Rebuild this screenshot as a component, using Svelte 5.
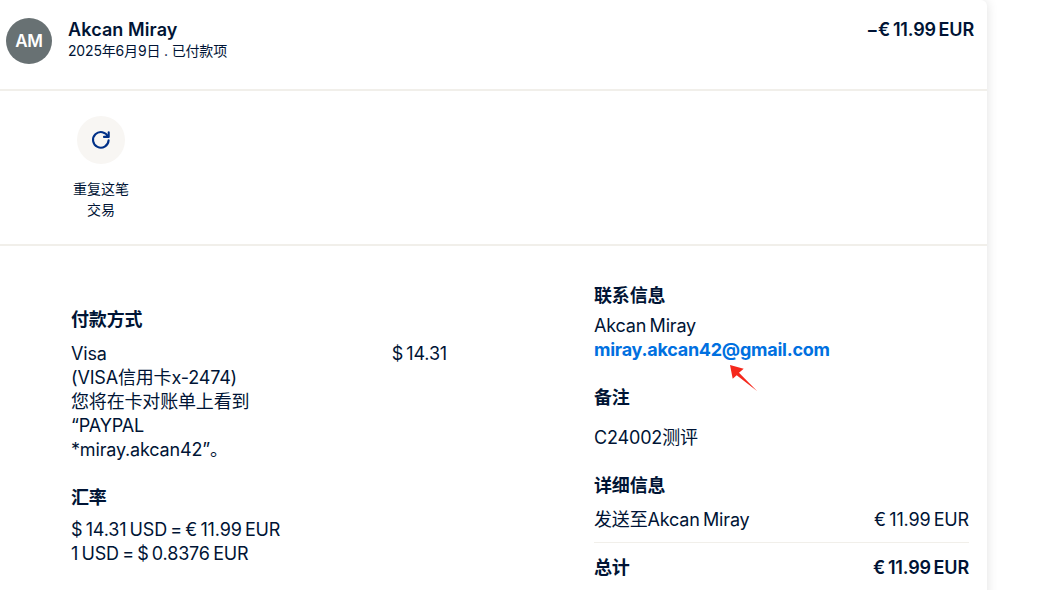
<script lang="ts">
  const rates = ['$ 14.31 USD = € 11.99 EUR', '1 USD = $ 0.8376 EUR']
</script>

<div class="page">
  <main class="card">
    <header class="head">
      <div class="avatar">AM</div>
      <div class="who">
        <div class="name">Akcan Miray</div>
        <div class="sub">2025年6月9日 . 已付款项</div>
      </div>
      <div class="amount">−€ 11.99 EUR</div>
    </header>

    <section class="actions">
      <button class="action">
        <span class="circle">
          <svg width="24" height="24" viewBox="0 0 24 24" fill="none" stroke="#003087" stroke-width="2.1" stroke-linecap="round" stroke-linejoin="round">
            <path d="M19 8.8A7.8 7.8 0 1 0 19.6 12.4"/>
            <path d="M19.7 4.2v4.7H15"/>
          </svg>
        </span>
        <span class="action-label">重复这笔<br />交易</span>
      </button>
    </section>

    <section class="details">
      <div class="left">
        <h3>付款方式</h3>
        <div class="method">
          <div class="method-text">
            Visa<br />
            (VISA信用卡x-2474)<br />
            您将在卡对账单上看到<br />
            “PAYPAL<br />
            *miray.akcan42”。
          </div>
          <div class="method-sum">$ 14.31</div>
        </div>
        <h3 class="rate-title">汇率</h3>
        <div class="rates">
          {#each rates as rate}
            <div>{rate}</div>
          {/each}
        </div>
      </div>

      <div class="right">
        <h3>联系信息</h3>
        <div class="contact">
          <div>Akcan Miray</div>
          <div class="email-row">
            <a class="email" href="#mail">miray.akcan42@gmail.com</a>
            <svg class="arrow" width="34" height="32" viewBox="0 0 34 32">
              <path d="M3 3 L16.7 6.7 L12 10.7 L30 29 L9.7 13.3 L5.7 16.7 Z" fill="#f5281c"/>
            </svg>
          </div>
        </div>
        <h3 class="note-title">备注</h3>
        <p class="note">C24002测评</p>
        <h3 class="info-title">详细信息</h3>
        <div class="row">
          <span>发送至Akcan Miray</span>
          <span>€ 11.99 EUR</span>
        </div>
        <div class="row total">
          <span>总计</span>
          <span>€ 11.99 EUR</span>
        </div>
      </div>
    </section>
  </main>
</div>

<style>
  :global(body) {
    margin: 0;
    background: #fff;
  }
  .page {
    width: 1046px;
    height: 590px;
    overflow: hidden;
    font-family: Inter, "Noto Sans CJK SC", sans-serif;
    letter-spacing: -0.17px;
    word-spacing: -1.6px;
    color: #001435;
  }
  .card {
    width: 987px;
    height: 640px;
    background: #fff;
    border-top-right-radius: 6px;
    box-shadow: 0 0 12px rgba(0, 0, 0, 0.12);
  }
  .head {
    display: flex;
    align-items: flex-start;
    height: 91px;
    padding: 18px 13px 0 6px;
    box-sizing: border-box;
    border-bottom: 2px solid #f1efea;
  }
  .avatar {
    width: 46px;
    height: 46px;
    border-radius: 50%;
    background: #687173;
    color: #fff;
    font-size: 17px;
    font-weight: 600;
    line-height: 46px;
    text-align: center;
  }
  .who {
    margin-left: 16px;
    flex: 1;
  }
  .name {
    font-size: 18px;
    font-weight: 600;
    letter-spacing: 0.1px;
    word-spacing: 0;
    line-height: 24px;
  }
  .sub {
    font-size: 14px;
    word-spacing: 0;
    line-height: 17px;
  }
  .amount {
    font-size: 18px;
    font-weight: 600;
    line-height: 24px;
  }
  .actions {
    height: 155px;
    box-sizing: border-box;
    padding: 25px 0 0 62px;
    border-bottom: 2px solid #f1efea;
  }
  .action {
    display: flex;
    flex-direction: column;
    align-items: center;
    width: 78px;
    padding: 0;
    border: none;
    background: none;
    color: inherit;
    font-family: inherit;
    letter-spacing: 0;
  }
  .circle {
    display: flex;
    align-items: center;
    justify-content: center;
    width: 48px;
    height: 48px;
    border-radius: 50%;
    background: #f8f6f3;
  }
  .action-label {
    margin-top: 14px;
    font-size: 14px;
    line-height: 21px;
    text-align: center;
  }
  .details {
    display: flex;
    padding: 0 18px 0 71px;
  }
  .left {
    width: 376px;
    padding-top: 62px;
    margin-right: 147px;
  }
  .right {
    flex: 1;
    padding-top: 38px;
  }
  h3 {
    margin: 0;
    font-size: 18px;
    font-weight: 600;
    line-height: 24px;
  }
  .method {
    display: flex;
    justify-content: space-between;
    margin-top: 10px;
    font-size: 18px;
    line-height: 24px;
  }
  .method-text {
    width: 220px;
  }
  .rate-title {
    margin-top: 24px;
  }
  .rates {
    margin-top: 8px;
    font-size: 18px;
    line-height: 24px;
  }
  .contact {
    margin-top: 6px;
    font-size: 18px;
    line-height: 24px;
  }
  .email-row {
    position: relative;
  }
  .email {
    color: #0070e0;
    font-weight: 700;
    letter-spacing: -0.25px;
    text-decoration: none;
  }
  .arrow {
    position: absolute;
    left: 133px;
    top: 24px;
  }
  .note-title {
    margin-top: 24px;
  }
  .note {
    margin: 16px 0 0;
    font-size: 18px;
    line-height: 24px;
  }
  .info-title {
    margin-top: 24px;
  }
  .row {
    display: flex;
    justify-content: space-between;
    margin-top: 10px;
    padding-bottom: 10px;
    font-size: 18px;
    line-height: 24px;
  }
  .row.total {
    margin-top: 0;
    padding-top: 13px;
    border-top: 1px solid #f1efea;
    font-weight: 600;
  }
</style>
